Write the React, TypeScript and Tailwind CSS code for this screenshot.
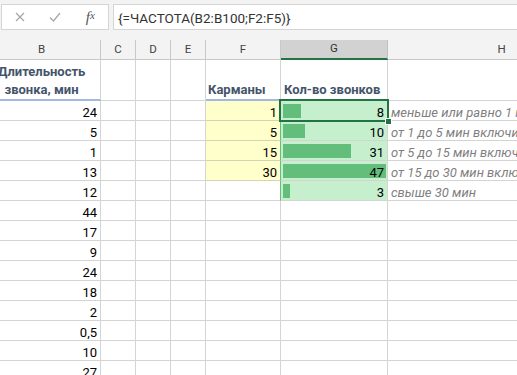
import React from 'react';

const COLS = ['B', 'C', 'D', 'E', 'F', 'G', 'H'];
const durations = ['24', '5', '1', '13', '12', '44', '17', '9', '24', '18', '2', '0,5', '10', '27', ''];
const bins = ['1', '5', '15', '30'];
const counts = [8, 10, 31, 47, 3];
const notes = [
  'меньше или равно 1 мин',
  'от 1 до 5 мин включительно',
  'от 5 до 15 мин включительно',
  'от 15 до 30 мин включительно',
  'свыше 30 мин',
];
const MAX = 47;
const BAR_MAX = 103;

function FormulaBar() {
  return (
    <div className="flex h-[40px] gap-[4px] bg-[#f3f3f3] pl-px pt-[4px]">
      <div className="flex h-[26px] w-[108px] items-center border border-[#d5d5d5] bg-white">
        <div className="flex w-[36px] justify-center">
          <svg width="10" height="10" viewBox="0 0 10 10">
            <path d="M1 1 L9 9 M9 1 L1 9" stroke="#a6a6a6" strokeWidth="1.2" fill="none" />
          </svg>
        </div>
        <div className="flex w-[36px] justify-center">
          <svg width="12" height="10" viewBox="0 0 12 10">
            <path d="M1 5.5 L4.5 9 L11 1" stroke="#a6a6a6" strokeWidth="1.2" fill="none" />
          </svg>
        </div>
        <div className="flex w-[36px] justify-center font-['Liberation_Serif',serif] text-[15px] italic leading-none text-[#555]">
          f<span className="text-[11px]">x</span>
        </div>
      </div>
      <div className="flex h-[26px] flex-1 items-center border border-r-0 border-[#d5d5d5] bg-white pl-[4px] pt-[3px] text-[13.5px] text-[#333]">
        {'{=ЧАСТОТА(B2:B100;F2:F5)}'}
      </div>
    </div>
  );
}

function Cell({ className = '', children }: { className?: string; children?: React.ReactNode }) {
  return <div className={`relative box-border h-[20px] border-r border-b border-[#d4d4d4] ${className}`}>{children}</div>;
}

export default function App() {
  return (
    <div className="relative h-[375px] w-[517px] overflow-hidden bg-white font-['Roboto','Noto_Sans',sans-serif] text-[13px] text-black">
      <FormulaBar />
      <div className="-ml-[17px] grid w-[633px] grid-cols-[118px_35px_35px_35px_75px_107px_228px]">
        {COLS.map((c) => (
          <div
            key={c}
            className={`box-border flex h-[20px] items-center justify-center border-r border-b text-[11.5px] ${
              c === 'G'
                ? 'border-r-[#c0c0c0] border-b-2 border-b-[#217346] bg-[#d2d2d2] text-[#333]'
                : 'border-[#c8c8c8] bg-[#f3f3f3] text-[#444]'
            }`}
          >
            {c}
          </div>
        ))}

        {/* row 1: headings */}
        <div className="box-border h-[41px] border-r border-b-2 border-r-[#d4d4d4] border-b-[#a2b8e1] pt-[3px] text-center font-bold leading-[18px] text-[#44546a]">
          Длительность
          <br />
          звонка, мин
        </div>
        <div className="box-border h-[41px] border-r border-b border-[#d4d4d4]" />
        <div className="box-border h-[41px] border-r border-b border-[#d4d4d4]" />
        <div className="box-border h-[41px] border-r border-b border-[#d4d4d4]" />
        <div className="box-border flex h-[41px] items-end border-r border-b-2 border-r-[#d4d4d4] border-b-[#a2b8e1] pl-[2px] font-bold leading-[18px] text-[#44546a]">
          Карманы
        </div>
        <div className="box-border flex h-[41px] items-end border-r border-b-2 border-r-[#d4d4d4] border-b-[#a2b8e1] pl-[3px] font-bold leading-[18px] whitespace-nowrap text-[#44546a]">
          Кол-во звонков
        </div>
        <div className="box-border h-[41px] border-r border-b border-[#d4d4d4]" />

        {durations.map((d, i) => {
          const hasBin = i < bins.length;
          const hasCount = i < counts.length;
          return (
            <React.Fragment key={i}>
              <Cell className="pt-[4px] pr-[3px] text-right leading-[15px]">{d}</Cell>
              <Cell />
              <Cell />
              <Cell />
              <Cell
                className={`pt-[4px] pr-[3px] text-right leading-[15px] ${hasBin ? 'border-b-[#d6d4b0] bg-[#ffffcc]' : ''} ${
                  hasCount ? 'border-r-[#63be7b]' : ''
                }`}
              >
                {hasBin ? bins[i] : ''}
              </Cell>
              <Cell className={hasCount ? 'border-[#63be7b] bg-[#c6efce]' : ''}>
                {hasCount && (
                  <>
                    <div
                      className="absolute top-[3px] bottom-[2px] left-[2px] bg-[#63be7b]"
                      style={{ width: (counts[i] / MAX) * BAR_MAX }}
                    />
                    <div className="relative pt-[4px] pr-[3px] text-right leading-[15px]">{counts[i]}</div>
                  </>
                )}
                {i === 0 && (
                  <div className="absolute -top-[2px] -left-[2px] z-10 h-[23px] w-[110px] border-2 border-[#217346]">
                    <div className="absolute -right-[5px] -bottom-[5px] h-[7px] w-[7px] border border-white bg-[#217346]" />
                  </div>
                )}
              </Cell>
              <Cell className="pt-[4px] pl-[3px] leading-[15px] whitespace-nowrap text-[#7f7f7f] italic">
                {i < notes.length ? notes[i] : ''}
              </Cell>
            </React.Fragment>
          );
        })}
      </div>
    </div>
  );
}
